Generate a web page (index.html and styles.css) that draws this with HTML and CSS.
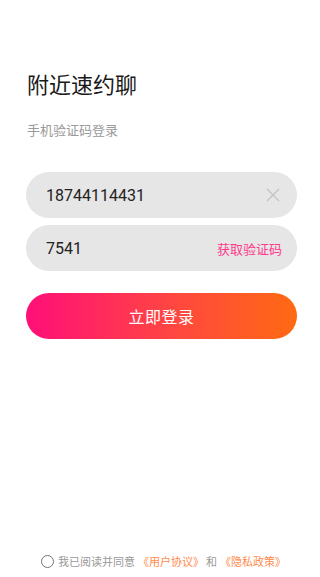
FILE: index.html
```html
<!DOCTYPE html>
<html lang="zh">
<head>
<meta charset="utf-8">
<link rel="stylesheet" href="styles.css">
</head>
<body>
<div class="page">
  <main class="main">
    <h1 class="title">附近速约聊</h1>
    <p class="subtitle">手机验证码登录</p>
    <div class="field">
      <span class="value">18744114431</span>
      <svg class="clear" width="14" height="14" viewBox="0 0 14 14"><path d="M1 1L13 13M13 1L1 13" stroke="#c4c4c4" stroke-width="1.4" fill="none"/></svg>
    </div>
    <div class="field">
      <span class="value">7541</span>
      <span class="code">获取验证码</span>
    </div>
    <button class="login">立即登录</button>
  </main>
  <footer class="agree">
    <span class="radio"></span>
    <span class="muted">我已阅读并同意</span>
    <span class="link">《用户协议》</span>
    <span class="muted and">和</span>
    <span class="link">《隐私政策》</span>
  </footer>
</div>
</body>
</html>
```
FILE: styles.css
```css
* { box-sizing: border-box; }
html, body { margin: 0; padding: 0; background: #fff; }
body {
  font-family: Roboto, "Noto Sans CJK SC", "Noto Sans", sans-serif;
  color: #222;
}
.page {
  height: 577px;
  display: flex;
  flex-direction: column;
}
.main {
  flex: 1;
  padding: 72px 23px 0 26px;
}
.title {
  margin: 0;
  font-size: 22px;
  font-weight: 400;
  line-height: 28px;
  color: #1a1a1a;
  padding-left: 1px;
}
.subtitle {
  margin: 22px 0 0;
  font-size: 13px;
  line-height: 18px;
  color: #999;
  padding-left: 1px;
}
.field {
  height: 46px;
  border-radius: 23px;
  background: #e6e6e6;
  display: flex;
  align-items: center;
  justify-content: space-between;
  padding: 0 15px 0 20px;
  margin-top: 7px;
}
.subtitle + .field { margin-top: 32px; }
.value {
  font-size: 16px;
  color: #222;
}
.clear { margin-right: 2px; }
.code {
  font-size: 13px;
  color: #ff3a8c;
}
.login {
  display: block;
  width: 100%;
  height: 46px;
  margin-top: 22px;
  border: 0;
  border-radius: 23px;
  background: linear-gradient(90deg, #ff0f78 0%, #ff4740 55%, #ff6a12 100%);
  color: #fff;
  font-family: inherit;
  font-size: 16px;
  letter-spacing: 0.5px;
  padding-bottom: 2px;
}
.agree {
  display: flex;
  align-items: center;
  padding: 0 0 2px 41px;
  height: 30px;
  font-size: 11px;
}
.radio {
  width: 13px;
  height: 13px;
  border: 1px solid #777;
  border-radius: 50%;
  margin-right: 4px;
}
.muted { color: #999; }
.link { color: #ff8a4c; margin-left: 3px; }
.and { margin: 0 0 0 2px; }
```
